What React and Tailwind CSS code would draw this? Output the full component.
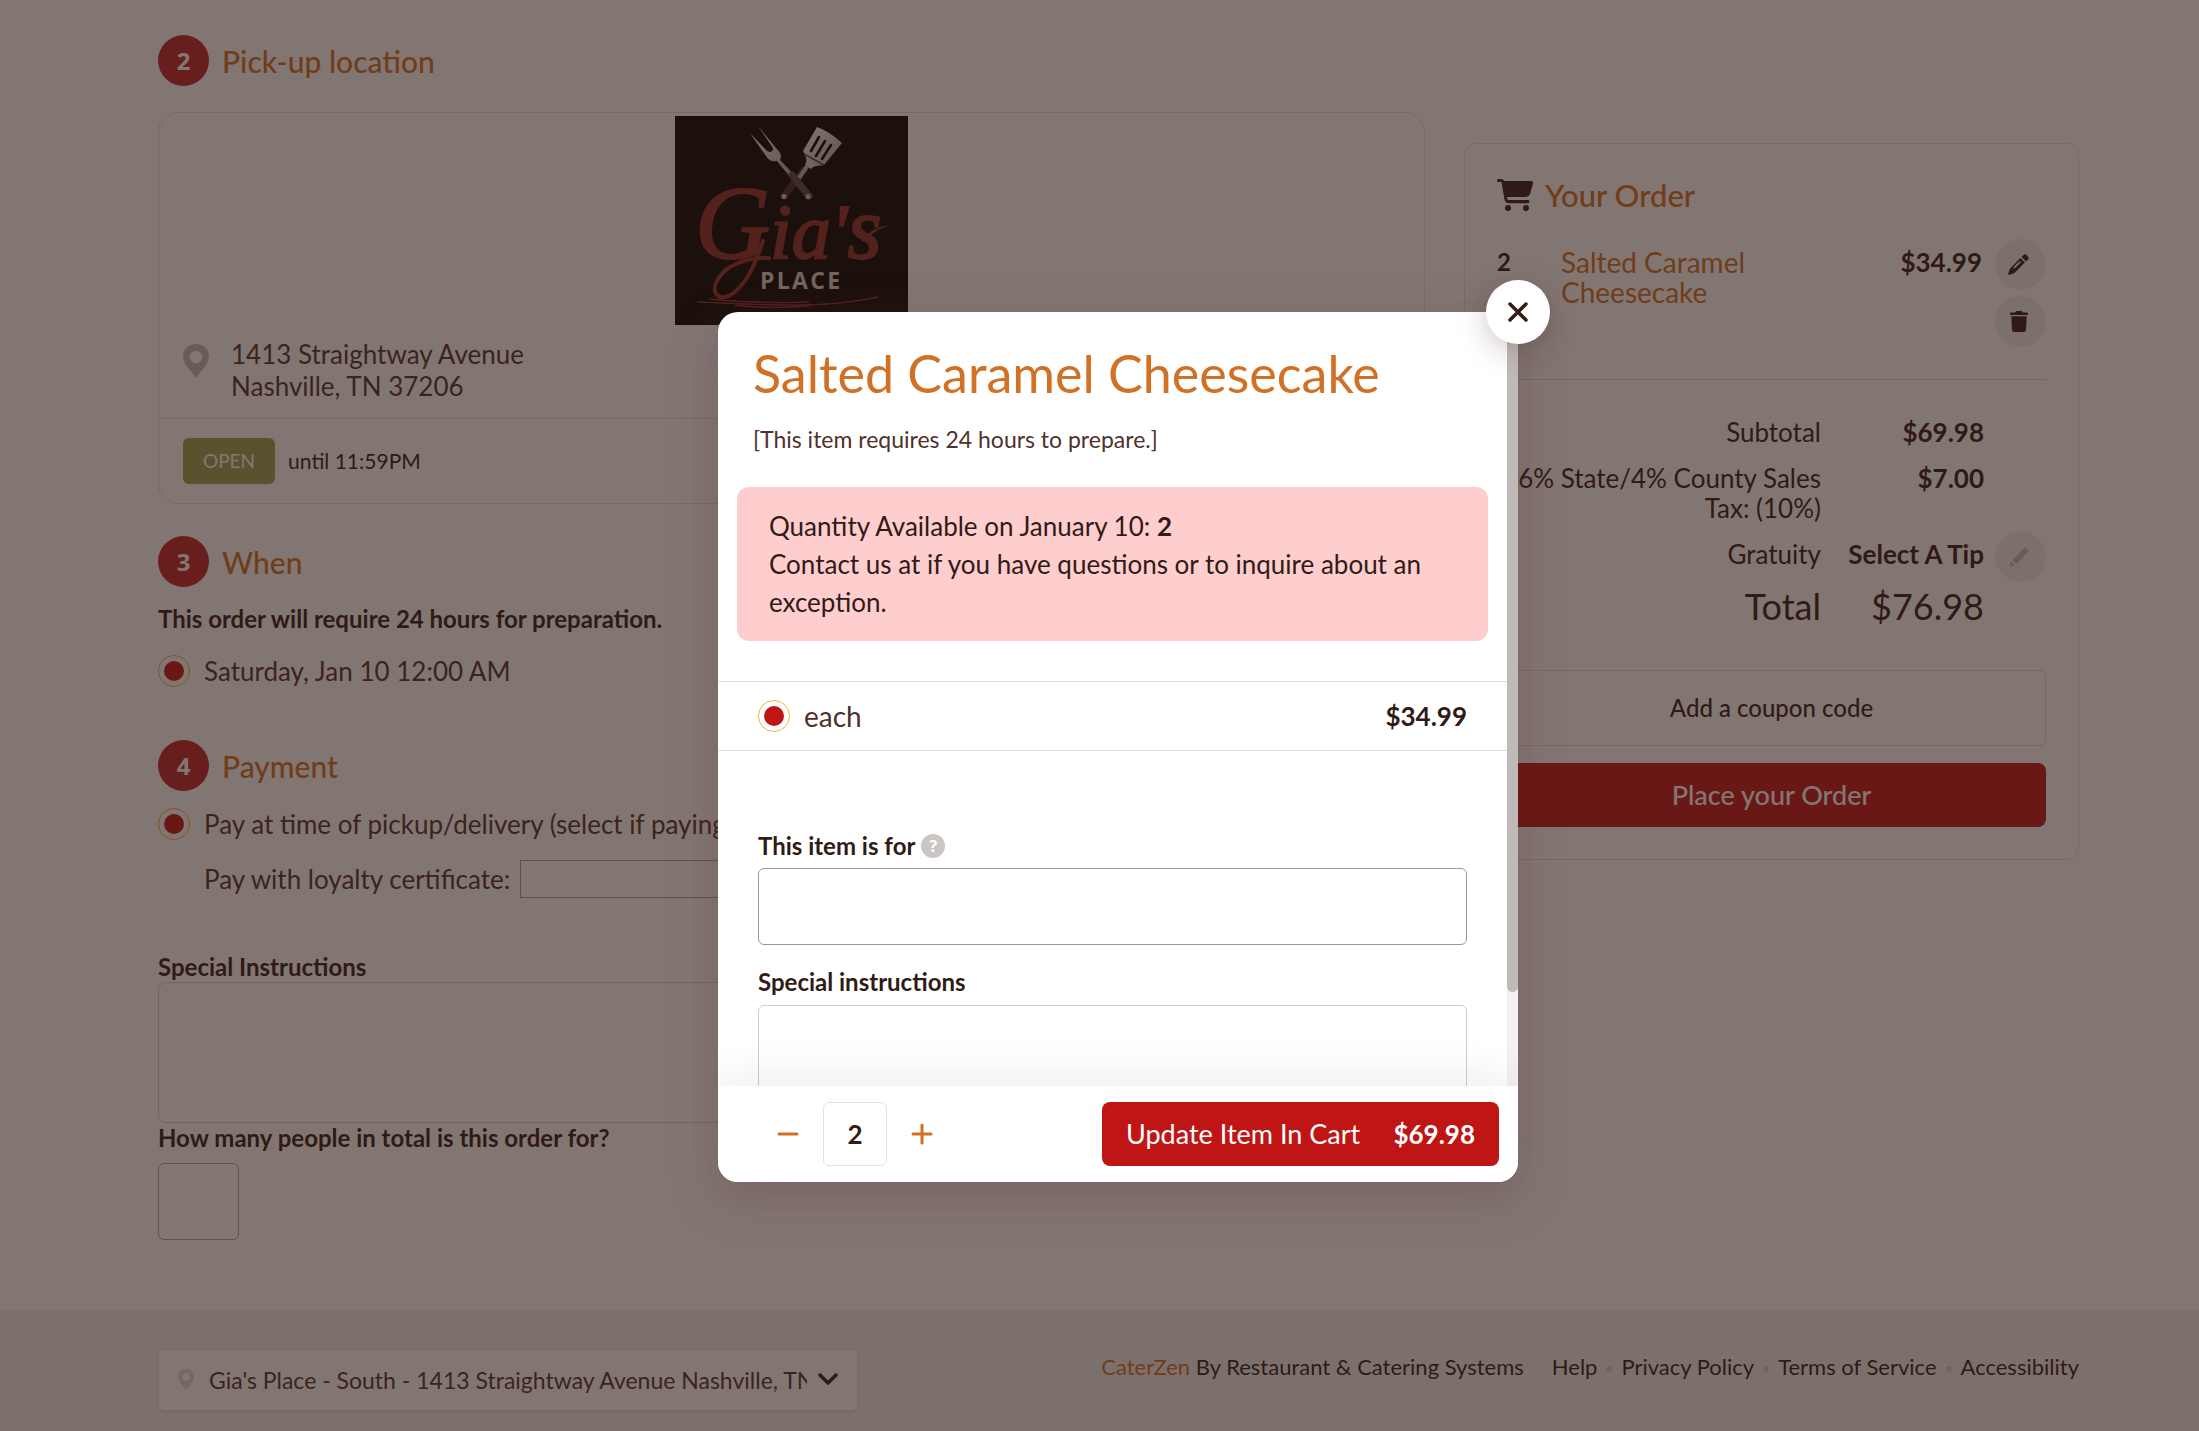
import React from "react";

function Pin({ className }) {
  return (
    <svg viewBox="0 0 26 34" className={className} fill="currentColor" aria-hidden="true">
      <path
        fillRule="evenodd"
        d="M13 0C5.8 0 0 5.6 0 12.6 0 20.6 8 26.5 13 34c5-7.500 13-13.400 13-21.400C26 5.600 20.200 0 13 0Zm0 19.200a6.200 6.200 0 1 1 0-12.400 6.200 6.200 0 0 1 0 12.400Z"
      />
    </svg>
  );
}

function Cart({ className }) {
  return (
    <svg viewBox="0 0 36 32" className={className} fill="currentColor" aria-hidden="true">
      <path d="M0 1.500C0 .6.700 0 1.500 0H4c1.500 0 2.700.8 3.200 2H34c1.400 0 2.300 1.200 2 2.500l-3 10.800A5 5 0 0 1 28.200 18H10l.4 1.900c.1.700.8 1.200 1.500 1.200H31c.900 0 1.500.600 1.500 1.500S31.900 24.200 31 24.200H12a4.500 4.500 0 0 1-4.500-3.700L4.600 3.600C4.500 3.200 4.300 3 4 3H1.500C.7 3 0 2.400 0 1.500Z" />
      <circle cx="11" cy="29" r="3" />
      <circle cx="29" cy="29" r="3" />
    </svg>
  );
}

function Pencil({ className }) {
  return (
    <svg viewBox="0 0 22 22" className={className} fill="currentColor" aria-hidden="true">
      <path d="m16 1.300-1.800 1.800 4.700 4.700 1.800-1.800a2.600 2.600 0 0 0 0-3.700l-1-1a2.600 2.600 0 0 0-3.700 0Z" />
      <path
        fillRule="evenodd"
        d="M13 4.300 2.700 14.600c-.5.500-.8 1-1 1.700L.1 20.800c-.2.700.4 1.300 1.100 1.100l4.500-1.500c.6-.2 1.200-.6 1.700-1L17.700 9 13 4.300ZM13 7.900c.4.400.4 1 0 1.300l-5.800 5.800a1 1 0 0 1-1.300-1.300l5.800-5.800c.4-.4.900-.4 1.300 0Z"
      />
    </svg>
  );
}

function SolidPencil({ className }) {
  return (
    <svg viewBox="0 0 20 20" className={className} fill="currentColor" aria-hidden="true">
      <path d="m16 0 4 4L7.500 17.200l-4-4Z" />
      <path d="M2 14.500 6 18.500 4.500 19.500H1V15.500Z" />
    </svg>
  );
}

function Trash({ className }) {
  return (
    <svg viewBox="0 0 18 21" className={className} fill="currentColor" aria-hidden="true">
      <path d="M5.500.7C5.700.3 6.100 0 6.600 0h4.800c.5 0 .9.3 1.100.7l.4.800h3.900c.7 0 1.200.5 1.200 1.200S17.500 4 16.800 4H1.200C.5 4 0 3.400 0 2.700s.5-1.200 1.200-1.200h3.900Z" />
      <path d="M1.200 5.200h15.600L16 19.100c-.1 1-.9 1.900-2 1.900H4c-1 0-1.900-.8-2-1.900Z" />
    </svg>
  );
}

function Logo() {
  return (
    <svg viewBox="0 0 233 209" className="h-[209px] w-[233px]" role="img" aria-label="Gia's Place">
      <defs>
        <linearGradient id="steel" x1="0" y1="0" x2="1" y2="1">
          <stop offset="0" stopColor="#ffffff" />
          <stop offset="1" stopColor="#a8a0a0" />
        </linearGradient>
      </defs>
      <rect width="233" height="209" fill="#000000" />
      <g>
        <path d="M129 54 109 80" stroke="#3d2620" strokeWidth="7" strokeLinecap="round" />
        <path d="m133 49-9 13" stroke="#bdb5b5" strokeWidth="4" />
        <path d="M142 11c8 3 18 9 25 16l-18 22c-5 1-9 0-13 4l-6-4c3-5 1-8-2-14Z" fill="url(#steel)" />
        <path d="m144 21-8 14m14-10-9 15m15-11-9 14" stroke="#000000" strokeWidth="2.600" strokeLinecap="round" />
        <path d="m129 38 20 11" stroke="#514646" strokeWidth="1.500" />
        <path d="M75 17 90 33c4 4 8 4 8-1L83 10l18 22c5 5 6 8 4 12 4 4 9 9 13 14l-3 3-13-16c-4 1-8 0-11-5Z" fill="url(#steel)" />
        <path d="m117 59 17 21" stroke="#54494a" strokeWidth="7" strokeLinecap="round" />
        <circle cx="109" cy="80.500" r="2.500" fill="#c9bfbf" />
        <circle cx="133" cy="80.500" r="2.500" fill="#c9bfbf" />
      </g>
      <text x="20" y="142" fill="#8c2c26" stroke="#8c2c26" strokeWidth="2" fontSize="104" fontStyle="italic" fontFamily="'Liberation Serif', serif">
        G<tspan fontSize="78">ia'</tspan>
        <tspan fontSize="88">s</tspan>
      </text>
      <path d="M186 124c8-9 18-14 30-15-12 3-20 9-28 17Z" fill="#8c2c26" />
      <path
        d="M94 142c-14-1-26 2-39 9-12 8-18 20-14 27 4 5 12 4 20-3 12-11 18-24 27-50"
        fill="none"
        stroke="#8c2c26"
        strokeWidth="4"
        strokeLinecap="round"
      />
      <text x="85" y="173" fill="#dcd5d2" fontSize="23" fontWeight="700" fontFamily="'Open Sans', sans-serif" className="tracking-widest">
        PLACE
      </text>
      <path d="M22 186c60 2 120 8 181-5-60 13-120 7-181 5Z" fill="#8c2c26" stroke="#8c2c26" />
      <path d="M34 183c30 3 70 5 100 3-30 1-70 0-100-3ZM60 189c20 3 50 3 74 1-24 2-50 2-74-1Z" fill="#8c2c26" stroke="#8c2c26" />
    </svg>
  );
}

function Step({ number, children }) {
  return (
    <div className="flex h-[51px] items-center gap-[13px]">
      <span className="flex size-[51px] items-center justify-center rounded-full bg-[#bb252a] font-['Open_Sans',sans-serif] text-[24px] font-bold text-white">
        {number}
      </span>
      <h2 className="text-[30px] leading-[30px] font-medium text-[#d17125]">{children}</h2>
    </div>
  );
}

function Radio(props) {
  return (
    <input
      type="radio"
      defaultChecked
      className="size-8 shrink-0 appearance-none rounded-full border border-[#f3b33f] bg-[#c01515] bg-clip-content p-[5px]"
      {...props}
    />
  );
}

function RoundButton({ label, children }) {
  return (
    <button type="button" aria-label={label} className="flex size-[51px] items-center justify-center rounded-full bg-[#f1f1f1] pr-1">
      {children}
    </button>
  );
}

function Checkout() {
  return (
    <main className="grid grid-cols-[1267fr_615fr] items-start gap-[39px] pt-[35px] pr-[120px] pb-[70px] pl-[158px]">
      <div>
        <Step number="2">Pick-up location</Step>
        <section className="mt-[26px] rounded-[20px] border border-[#e3e3e3]">
          <div className="flex justify-center pt-[3px]">
            <Logo />
          </div>
          <div className="mt-[13px] flex gap-[22px] px-6 pb-4">
            <Pin className="mt-[6px] h-[34px] w-[26px] text-[#bebebe]" />
            <address className="text-[26px] leading-8 text-[#4f322b] not-italic">
              1413 Straightway Avenue
              <br />
              Nashville, TN 37206
            </address>
          </div>
          <div className="flex items-center gap-[13px] border-t border-[#e3e3e3] px-6 py-[19px]">
            <span className="rounded-md bg-[#9ca355] px-5 text-[19px] leading-[46px] text-white">OPEN</span>
            <span className="text-[21px]">until 11:59PM</span>
          </div>
        </section>

        <div className="mt-8">
          <Step number="3">When</Step>
          <p className="mt-4 text-[24px] leading-8 font-bold">This order will require 24 hours for preparation.</p>
          <label className="mt-5 flex items-center gap-[14px] text-[26px] leading-8 text-[#4f322b]">
            <Radio name="when" />
            Saturday, Jan 10 12:00 AM
          </label>
        </div>

        <div className="mt-[53px]">
          <Step number="4">Payment</Step>
          <label className="mt-[17px] flex items-center gap-[14px] text-[26px] leading-8 text-[#4f322b]">
            <Radio name="payment" />
            Pay at time of pickup/delivery (select if paying with card)
          </label>
          <label className="mt-5 ml-[46px] flex items-center gap-[10px] text-[26px] leading-8 text-[#4f322b]">
            Pay with loyalty certificate:
            <input type="text" className="h-[38px] w-[300px] border border-[#a5a0a0]" />
          </label>
        </div>

        <label htmlFor="order-notes" className="mt-[54px] block text-[24px] leading-[30px] font-bold">
          Special Instructions
        </label>
        <textarea id="order-notes" className="block h-[141px] w-full resize-none rounded-lg border border-[#d5d5da]" />
        <label htmlFor="people" className="block text-[24px] leading-[30px] font-bold">
          How many people in total is this order for?
        </label>
        <input id="people" type="text" className="mt-[10px] block h-[77px] w-[81px] rounded-md border border-[#a5a0a0]" />
      </div>

      <aside className="mt-[108px] rounded-xl border border-[#e3e3e3] px-8 pt-[31px] pb-8">
        <h2 className="flex items-center gap-3 text-[31px] leading-10 font-medium text-[#d17125]">
          <Cart className="h-8 w-9 text-[#301b16]" />
          Your Order
        </h2>
        <div className="mt-6 flex border-b border-[#dcdcdc] pb-8">
          <span className="w-16 pt-2 text-[24px] leading-[30px] font-bold">2</span>
          <a href="#item" className="flex-1 pt-2 text-[28px] leading-[30px] text-[#d17125]">
            Salted Caramel
            <br />
            Cheesecake
          </a>
          <span className="pt-2 text-[26px] leading-[30px] font-bold">$34.99</span>
          <div className="ml-[13px] flex flex-col gap-[6px]">
            <RoundButton label="Edit item">
              <Pencil className="size-[21px]" />
            </RoundButton>
            <RoundButton label="Remove item">
              <Trash className="h-[21px] w-[18px]" />
            </RoundButton>
          </div>
        </div>
        <dl className="mt-[37px] grid grid-cols-[1fr_163px_62px] items-start gap-y-4 text-right text-[26px] leading-[30px]">
          <dt>Subtotal</dt>
          <dd className="col-span-2 pr-[62px] font-bold">$69.98</dd>
          <dt>6% State/4% County Sales Tax: (10%)</dt>
          <dd className="col-span-2 pr-[62px] font-bold">$7.00</dd>
          <dt>Gratuity</dt>
          <dd className="font-bold whitespace-nowrap">Select A Tip</dd>
          <dd className="-mt-2 -mb-3 flex justify-end">
            <RoundButton label="Edit tip">
              <SolidPencil className="size-5 text-[#bebebe]" />
            </RoundButton>
          </dd>
          <dt className="text-[36px] leading-10">Total</dt>
          <dd className="col-span-2 pr-[62px] text-[36px] leading-10">$76.98</dd>
        </dl>
        <button type="button" className="mt-[44px] block h-[76px] w-full rounded-md border border-[#dcdcdc] text-[24px] font-medium">
          Add a coupon code
        </button>
        <button type="button" className="mt-[17px] block h-16 w-full rounded-lg bg-[#c01515] text-[27px] font-medium text-white">
          Place your Order
        </button>
      </aside>
    </main>
  );
}

const LINKS = ["Help", "Privacy Policy", "Terms of Service", "Accessibility"];

function Footer() {
  return (
    <footer className="flex flex-1 items-start justify-between bg-[#f1f1f1] pt-[39px] pr-[120px] pl-[158px]">
      <div className="relative w-[700px]">
        <Pin className="absolute top-5 left-5 h-[21px] w-4 text-[#dcdcdc]" />
        <select
          aria-label="Location"
          className="h-[62px] w-full appearance-none rounded-md border border-[#e8e8e8] bg-white pr-[50px] pl-[50px] text-[23px] text-[#4f322b] shadow-sm"
        >
          <option>Gia's Place - South - 1413 Straightway Avenue Nashville, TN 37206</option>
        </select>
        <svg viewBox="0 0 20 12" className="absolute top-6 right-5 h-3 w-5" fill="none" stroke="currentColor" strokeWidth="3.500" strokeLinecap="round" strokeLinejoin="round" aria-hidden="true">
          <path d="m2 2 8 8 8-8" />
        </svg>
      </div>
      <nav className="flex items-center pt-[2px] text-[22px] leading-8">
        <span className="mr-7">
          <a href="#caterzen" className="text-[#d17125]">CaterZen</a> By Restaurant &amp; Catering Systems
        </span>
        {LINKS.map((label, i) => (
          <React.Fragment key={label}>
            {i > 0 && <span className="mx-[9px] mt-1 size-[6px] rounded-full bg-[#d8d0d0]" />}
            <a href="#info">{label}</a>
          </React.Fragment>
        ))}
      </nav>
    </footer>
  );
}

function ItemDialog() {
  return (
    <div className="fixed inset-0 flex items-center justify-center bg-[rgba(47,26,21,0.6)] pt-[63px] pl-[37px]">
      <div role="dialog" aria-modal="true" aria-labelledby="item-title" className="relative w-[800px] rounded-[20px] shadow-[0_15px_50px_rgba(90,40,45,0.25)]">
        <div className="flex h-[870px] flex-col overflow-hidden rounded-[20px] bg-white">
          <div className="flex min-h-0 flex-1">
            <div className="relative min-w-0 flex-1 overflow-hidden pt-[29px]">
              <h1 id="item-title" className="px-[35px] text-[52px] leading-[64px] text-[#d17125]">
                Salted Caramel Cheesecake
              </h1>
              <p className="mt-[18px] px-[35px] text-[23px] leading-8 text-[#4f322b]">[This item requires 24 hours to prepare.]</p>
              <div className="mx-[19px] mt-8 rounded-xl bg-[#fecdcd] px-8 py-5 text-[26px] leading-[38px]">
                <p>
                  Quantity Available on January 10: <b>2</b>
                </p>
                <p>Contact us at if you have questions or to inquire about an exception.</p>
              </div>
              <div className="mt-10 flex h-[70px] items-center justify-between border-y border-[#dcdcdc] px-10 text-[26px]">
                <label className="flex items-center gap-[14px] text-[28px] text-[#4f322b]">
                  <Radio name="unit" />
                  each
                </label>
                <span className="font-bold">$34.99</span>
              </div>
              <div className="px-10">
                <div className="mt-[79px] flex items-center gap-[6px]">
                  <label htmlFor="item-for" className="text-[24px] leading-8 font-bold">
                    This item is for
                  </label>
                  <span className="flex size-6 items-center justify-center rounded-full bg-[#cbc5c4] font-['Open_Sans',sans-serif] text-base font-bold text-white">?</span>
                </div>
                <input id="item-for" type="text" className="mt-[6px] block h-[77px] w-full rounded-md border border-[#999999]" />
                <label htmlFor="item-notes" className="mt-[21px] block text-[24px] leading-8 font-bold">
                  Special instructions
                </label>
                <textarea id="item-notes" className="mt-[7px] block h-[141px] w-full resize-none rounded-md border border-[#ccced4]" />
              </div>
            </div>
            <div className="w-[11px] bg-[#f1f1f1]">
              <div className="h-[680px] rounded-full bg-[#bfbab8]" />
            </div>
          </div>
          <div className="relative flex h-24 items-center justify-between bg-white pr-[19px] pl-[59px] shadow-[0_0_50px_rgba(50,30,20,0.1)]">
            <div className="flex items-center gap-6 text-[#d17125]">
              <button type="button" aria-label="Decrease quantity">
                <svg viewBox="0 0 22 22" className="size-[22px]" stroke="currentColor" strokeWidth="3" strokeLinecap="round" aria-hidden="true">
                  <path d="M2 11h18" />
                </svg>
              </button>
              <input
                aria-label="Quantity"
                defaultValue="2"
                className="size-16 rounded-md border border-[#e3e3e3] text-center text-[26px] font-bold text-[#301b16]"
              />
              <button type="button" aria-label="Increase quantity">
                <svg viewBox="0 0 22 22" className="size-[22px]" stroke="currentColor" strokeWidth="3" strokeLinecap="round" aria-hidden="true">
                  <path d="M2 11h18M11 2v18" />
                </svg>
              </button>
            </div>
            <button type="button" className="flex h-16 w-[397px] items-center justify-between rounded-lg bg-[#c01515] px-6 text-[27px] text-white">
              <span>Update Item In Cart</span>
              <span className="text-[26px] font-bold">$69.98</span>
            </button>
          </div>
        </div>
        <button
          type="button"
          aria-label="Close"
          className="absolute -top-8 -right-8 flex size-16 items-center justify-center rounded-full bg-white shadow-[0_6px_30px_rgba(60,20,20,0.25)]"
        >
          <svg viewBox="0 0 20 20" className="size-5" stroke="currentColor" strokeWidth="3.500" strokeLinecap="round" aria-hidden="true">
            <path d="m2 2 16 16M18 2 2 18" />
          </svg>
        </button>
      </div>
    </div>
  );
}

export default function App() {
  return (
    <div className="flex min-h-screen flex-col bg-white font-[Lato,'Open_Sans',sans-serif] text-[#301b16]">
      <Checkout />
      <Footer />
      <ItemDialog />
    </div>
  );
}
